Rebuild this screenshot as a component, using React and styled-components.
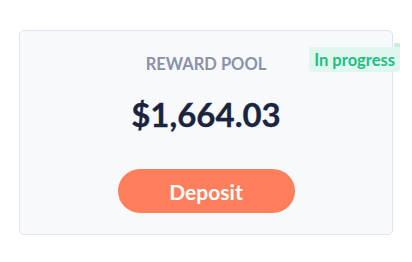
import React from 'react';
import styled, { createGlobalStyle } from 'styled-components';

const GlobalStyle = createGlobalStyle`
  * { box-sizing: border-box; }
  body {
    margin: 0;
    background: #ffffff;
    font-family: Lato, "Open Sans", sans-serif;
  }
`;

const Page = styled.div`
  padding: 30px 0 0 19px;
`;

const Card = styled.div`
  position: relative;
  width: 374px;
  height: 205px;
  border: 1px solid #e1e4f0;
  border-radius: 5px;
  background: #f8f9fc;
  display: flex;
  flex-direction: column;
  align-items: center;
  padding-top: 23px;
`;

// status ribbon, sticks out past the card's right edge
const Badge = styled.div`
  position: absolute;
  top: 16px;
  right: -8px;
  height: 25px;
  padding: 0 5px;
  display: flex;
  align-items: center;
  background: #dff7ee;
  color: #1dbf84;
  font-size: 16.5px;
  font-weight: 700;
  border-radius: 0 0 4px 4px;

  &::before {
    content: '';
    position: absolute;
    right: 0;
    top: -4px;
    width: 6px;
    height: 4px;
    background: #c4eedd;
    border-radius: 2px 2px 0 0;
  }
`;

const Label = styled.div`
  color: #8a92a8;
  font-size: 16.5px;
  font-weight: 700;
  line-height: 20px;
`;

const Amount = styled.div`
  margin-top: 20px;
  color: #1a2340;
  font-size: 33px;
  font-weight: 700;
  line-height: 40px;
  -webkit-text-stroke: 0.3px #1a2340;
`;

const DepositButton = styled.button`
  margin-top: 35px;
  width: 177px;
  height: 44px;
  border: none;
  border-radius: 22px;
  background: #ff7f5c;
  color: #ffffff;
  font-family: Lato, "Open Sans", sans-serif;
  font-size: 21px;
  font-weight: 700;
  cursor: pointer;
`;

export default function App() {
  return (
    <>
      <GlobalStyle />
      <Page>
        <Card>
          <Badge>In progress</Badge>
          <Label>REWARD POOL</Label>
          <Amount>$1,664.03</Amount>
          <DepositButton>Deposit</DepositButton>
        </Card>
      </Page>
    </>
  );
}
